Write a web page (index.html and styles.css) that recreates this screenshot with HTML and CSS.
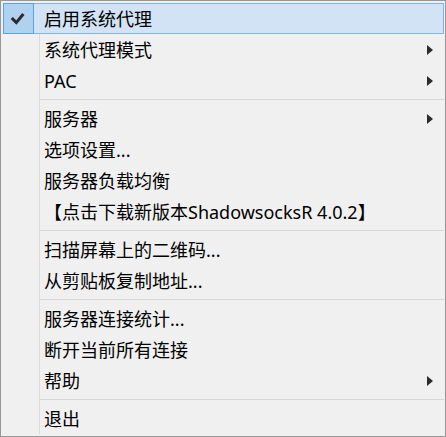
FILE: index.html
```html
<!DOCTYPE html>
<html lang="zh-CN">
<head>
<meta charset="utf-8">
<title>ShadowsocksR menu</title>
<link rel="stylesheet" href="styles.css">
</head>
<body>
<div class="menu">
  <ul class="list">
    <li class="item checked">
      <span class="icon"><svg width="31" height="31" viewBox="0 0 31 31"><path d="M9.8 16 L13.3 19.6 L19.4 12.2" fill="none" stroke="#2b2b2b" stroke-width="3" stroke-linecap="square" stroke-linejoin="miter"/></svg></span>
      <span class="label">启用系统代理</span>
    </li>
    <li class="item"><span class="icon"></span><span class="label">系统代理模式</span><span class="arrow"></span></li>
    <li class="item"><span class="icon"></span><span class="label">PAC</span><span class="arrow"></span></li>
    <li class="sep"></li>
    <li class="item"><span class="icon"></span><span class="label">服务器</span><span class="arrow"></span></li>
    <li class="item"><span class="icon"></span><span class="label">选项设置...</span></li>
    <li class="item"><span class="icon"></span><span class="label">服务器负载均衡</span></li>
    <li class="item"><span class="icon"></span><span class="label">【点击下载新版本ShadowsocksR 4.0.2】</span></li>
    <li class="sep"></li>
    <li class="item"><span class="icon"></span><span class="label">扫描屏幕上的二维码...</span></li>
    <li class="item"><span class="icon"></span><span class="label">从剪贴板复制地址...</span></li>
    <li class="sep"></li>
    <li class="item"><span class="icon"></span><span class="label">服务器连接统计...</span></li>
    <li class="item"><span class="icon"></span><span class="label">断开当前所有连接</span></li>
    <li class="item"><span class="icon"></span><span class="label">帮助</span><span class="arrow"></span></li>
    <li class="sep"></li>
    <li class="item"><span class="icon"></span><span class="label">退出</span></li>
  </ul>
</div>
</body>
</html>
```

FILE: styles.css
```css
html, body {
  margin: 0;
  padding: 0;
  background: #f0f0f0;
}

.menu {
  box-sizing: border-box;
  width: 446px;
  height: 437px;
  border: 1px solid #979797;
  background: #f0f0f0;
  padding: 2px 1px 2px 2px;
  font-family: "Noto Sans", "Noto Sans CJK SC", sans-serif;
  font-size: 18px;
  color: #000;
}

.list {
  list-style: none;
  margin: 0;
  padding: 0;
  height: 100%;
  background: linear-gradient(#dcdcdc, #dcdcdc) 36px 0 / 1px 100% no-repeat;
}

.item {
  box-sizing: border-box;
  height: 31px;
  display: grid;
  grid-template-columns: 41px 1fr auto;
  align-items: center;
  border: 1px solid transparent;
}

.item .icon {
  display: block;
  width: 31px;
  height: 31px;
  margin: -1px 0 0 -1px;
  box-sizing: border-box;
}

.label {
  line-height: 29px;
  white-space: nowrap;
  margin-left: -1px;
}

.checked {
  background: #d1e3f4;
  border-color: #7eb4ea;
}

.checked .icon {
  background: #afd2f0;
  border: 1px solid #5ba3dd;
}

.checked .icon svg {
  display: block;
  margin: -1px;
}

.arrow {
  width: 0;
  height: 0;
  border-left: 6px solid #2b2b2b;
  border-top: 5.5px solid transparent;
  border-bottom: 5.5px solid transparent;
  margin-right: 10px;
}

.sep {
  height: 7px;
  box-sizing: border-box;
  padding-top: 3px;
}

.sep::after {
  content: "";
  display: block;
  height: 1px;
  margin-left: 37px;
  background: #d7d7d7;
}
```
